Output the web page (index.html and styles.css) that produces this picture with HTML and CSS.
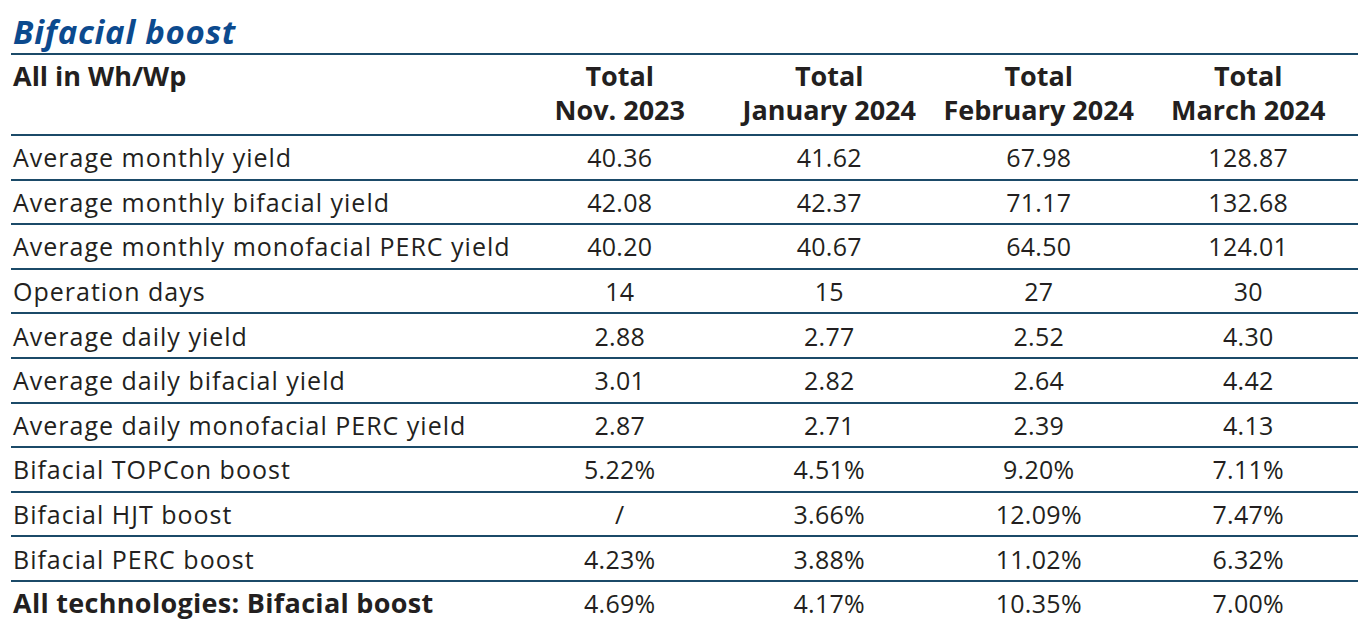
FILE: index.html
```html
<!DOCTYPE html>
<html lang="en">
<head>
<meta charset="utf-8">
<title>Bifacial boost</title>
<link rel="stylesheet" href="styles.css">
</head>
<body>
<div class="page">
  <h1 class="title">Bifacial boost</h1>
  <table class="data">
    <colgroup>
      <col class="c-label">
      <col class="c-num">
      <col class="c-num">
      <col class="c-num">
      <col class="c-num">
    </colgroup>
    <thead>
      <tr>
        <th class="lbl">All in Wh/Wp</th>
        <th>Total<br>Nov. 2023</th>
        <th>Total<br>January 2024</th>
        <th>Total<br>February 2024</th>
        <th>Total<br>March 2024</th>
      </tr>
    </thead>
    <tbody>
      <tr><td class="lbl">Average monthly yield</td><td>40.36</td><td>41.62</td><td>67.98</td><td>128.87</td></tr>
      <tr><td class="lbl">Average monthly bifacial yield</td><td>42.08</td><td>42.37</td><td>71.17</td><td>132.68</td></tr>
      <tr><td class="lbl">Average monthly monofacial PERC yield</td><td>40.20</td><td>40.67</td><td>64.50</td><td>124.01</td></tr>
      <tr><td class="lbl">Operation days</td><td>14</td><td>15</td><td>27</td><td>30</td></tr>
      <tr><td class="lbl">Average daily yield</td><td>2.88</td><td>2.77</td><td>2.52</td><td>4.30</td></tr>
      <tr><td class="lbl">Average daily bifacial yield</td><td>3.01</td><td>2.82</td><td>2.64</td><td>4.42</td></tr>
      <tr><td class="lbl">Average daily monofacial PERC yield</td><td>2.87</td><td>2.71</td><td>2.39</td><td>4.13</td></tr>
      <tr><td class="lbl">Bifacial TOPCon boost</td><td>5.22%</td><td>4.51%</td><td>9.20%</td><td>7.11%</td></tr>
      <tr><td class="lbl">Bifacial HJT boost</td><td>/</td><td>3.66%</td><td>12.09%</td><td>7.47%</td></tr>
      <tr><td class="lbl">Bifacial PERC boost</td><td>4.23%</td><td>3.88%</td><td>11.02%</td><td>6.32%</td></tr>
      <tr class="total"><td class="lbl">All technologies: Bifacial boost</td><td>4.69%</td><td>4.17%</td><td>10.35%</td><td>7.00%</td></tr>
    </tbody>
  </table>
</div>
</body>
</html>
```
FILE: styles.css
```css
html, body {
  margin: 0;
  padding: 0;
  background: #ffffff;
}

body {
  font-family: "Open Sans", "Noto Sans", "Liberation Sans", sans-serif;
  color: #231f20;
}

.page {
  padding: 12px 10px 0 11px;
  width: 1347px;
}

.title {
  margin: 0 0 1px 0;
  padding: 0 0 0 2px;
  height: 40px;
  line-height: 40px;
  font-size: 33px;
  font-weight: 700;
  font-style: italic;
  color: #0c4a8e;
  letter-spacing: 0.7px;
}

.data {
  width: 1347px;
  border-collapse: collapse;
  table-layout: fixed;
  border-top: 2px solid #1b4a68;
}

.c-label { width: 509px; }
.c-num { width: 209.5px; }

.data th {
  font-size: 27px;
  font-weight: 700;
  line-height: 34px;
  text-align: center;
  vertical-align: top;
  padding: 4px 10px 7px 0;
  border-bottom: 2px solid #1b4a68;
  white-space: nowrap;
}

.data td {
  font-size: 25px;
  line-height: 30px;
  height: 42.6px;
  padding: 0 10px 0 0;
  text-align: center;
  vertical-align: middle;
  border-bottom: 2px solid #1b4a68;
  white-space: nowrap;
  letter-spacing: 0.3px;
}

.data .lbl {
  text-align: left;
  padding-left: 2px;
}

.data td.lbl {
  letter-spacing: 1px;
}

.data tr.total td {
  border-bottom: none;
}

.data tr.total td.lbl {
  font-size: 27px;
  font-weight: 700;
  letter-spacing: 0.3px;
}
```
